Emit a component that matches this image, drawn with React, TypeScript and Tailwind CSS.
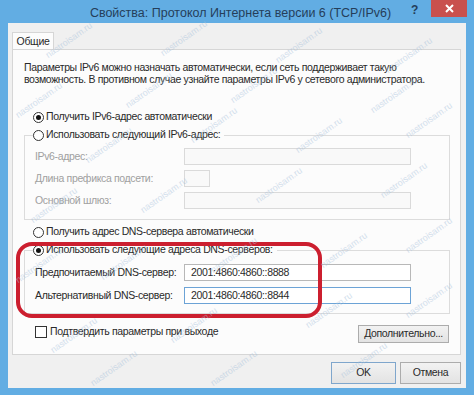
import React from 'react';

const font = { fontFamily: '"Liberation Sans", Arial, sans-serif' };

const marks: [number, number][] = [
  [70, 40], [185, 38], [300, 45], [410, 55],
  [40, 100], [150, 90], [255, 85], [395, 95],
  [110, 145], [215, 125], [320, 135], [430, 120],
  [55, 205], [165, 195], [280, 185], [405, 180],
  [40, 265], [125, 262], [235, 255], [345, 250], [430, 235],
  [75, 335], [195, 325], [330, 310], [430, 300],
  [115, 368], [235, 368], [365, 360],
];

function Radio({ checked }: { checked?: boolean }) {
  return (
    <span className="w-[11px] h-[11px] rounded-full border border-[#333] bg-white flex items-center justify-center shrink-0">
      {checked && <span className="w-[5px] h-[5px] rounded-full bg-[#111]" />}
    </span>
  );
}

function Field({
  label,
  value,
  disabled,
  small,
  focused,
}: {
  label: string;
  value?: string;
  disabled?: boolean;
  small?: boolean;
  focused?: boolean;
}) {
  return (
    <div className="flex items-center h-[17px]">
      <span className={`w-[149px] whitespace-nowrap ${disabled ? 'text-[#a0a0a0]' : 'text-[#2a2a2a]'}`}>{label}</span>
      <div
        className={`h-[17px] border flex items-center px-[6px] text-[#2a2a2a] ${
          small ? 'w-[26px]' : 'w-[227px]'
        } ${
          disabled
            ? 'border-[#dadada] bg-[#f9f9f9]'
            : focused
              ? 'border-[#6ca3d6] bg-white'
              : 'border-[#b8b8b8] bg-white'
        }`}
      >
        {value}
      </div>
    </div>
  );
}

export default function App() {
  return (
    <div
      className="w-[474px] h-[395px] bg-[#62ade3] relative overflow-hidden text-[10.5px] tracking-[-0.35px]"
      style={font}
    >
      {/* Title bar */}
      <div className="h-[23px] flex items-start">
        <div className="flex-1 pl-[70px] text-center text-[12.5px] tracking-normal leading-[26px] text-[#253e5a] whitespace-nowrap">
          Свойства: Протокол Интернета версии 6 (TCP/IPv6)
        </div>
        <div className="w-[20px] text-[12px] font-bold leading-[20px] text-[#253e5a]">?</div>
        <div className="w-[36px] h-[17px] mr-[7px] bg-[#c9504e] flex items-center justify-center">
          <svg width="9" height="9" viewBox="0 0 9 9">
            <path d="M1 1L8 8M8 1L1 8" stroke="white" strokeWidth="2" />
          </svg>
        </div>
      </div>

      {/* Client area */}
      <div className="mx-[8px] h-[365px] bg-[#f0f0f0] pl-[4px] pr-[5px] pt-[9px] flex flex-col">
        <div className="flex">
          <div className="h-[18px] w-[42px] border border-b-0 border-[#d6d6d6] bg-[#fcfcfc] text-[#2a2a2a] flex items-center justify-center whitespace-nowrap">
            Общие
          </div>
        </div>
        <div className="h-[306px] -mt-px border border-[#d6d6d6] bg-[#fcfcfc] flex flex-col">
          <p className="mt-[11px] ml-[11px] leading-[12px] text-[#2a2a2a] whitespace-nowrap">
            Параметры IPv6 можно назначать автоматически, если сеть поддерживает такую
            <br />
            возможность. В противном случае узнайте параметры IPv6 у сетевого администратора.
          </p>

          <div className="mt-[25px] ml-[20px] h-[14px] flex items-center gap-[2px] text-[#2a2a2a]">
            <Radio checked />
            <span>Получить IPv6-адрес автоматически</span>
          </div>

          <fieldset className="mt-[4px] ml-[11px] w-[426px] border border-[#dcdcdc] pl-[10px] pr-[38px] pt-[6px] pb-[10px] flex flex-col gap-[5px]">
            <legend className="ml-[-2px] pr-[4px] h-[14px] flex items-center gap-[2px] text-[#2a2a2a]">
              <Radio />
              <span>Использовать следующий IPv6-адрес:</span>
            </legend>
            <Field label="IPv6-адрес:" disabled />
            <Field label="Длина префикса подсети:" disabled small />
            <Field label="Основной шлюз:" disabled />
          </fieldset>

          <div className="mt-[5px] ml-[20px] h-[14px] flex items-center gap-[2px] text-[#2a2a2a]">
            <Radio />
            <span>Получить адрес DNS-сервера автоматически</span>
          </div>

          <fieldset className="mt-[4px] ml-[11px] w-[426px] border border-[#dcdcdc] pl-[10px] pr-[38px] pt-[7px] pb-[9px] flex flex-col gap-[6px]">
            <legend className="ml-[-2px] pr-[4px] h-[14px] flex items-center gap-[2px] text-[#2a2a2a]">
              <Radio checked />
              <span>Использовать следующие адреса DNS-серверов:</span>
            </legend>
            <Field label="Предпочитаемый DNS-сервер:" value="2001:4860:4860::8888" />
            <Field label="Альтернативный DNS-сервер:" value="2001:4860:4860::8844" focused />
          </fieldset>

          <div className="mt-[11px] ml-[22px] mr-[11px] h-[18px] flex items-start justify-between">
            <div className="h-[13px] flex items-center gap-[3px] text-[#2a2a2a]">
              <span className="w-[12px] h-[12px] border border-[#333] bg-white" />
              <span>Подтвердить параметры при выходе</span>
            </div>
            <button className="w-[91px] h-[18px] border border-[#acacac] bg-gradient-to-b from-[#f2f2f2] to-[#e3e3e3] text-[#2a2a2a] whitespace-nowrap">
              Дополнительно...
            </button>
          </div>
        </div>

        <div className="mt-[7px] flex justify-end gap-[4px]">
          <button className="w-[65px] h-[22px] border border-[#7fa6cc] bg-gradient-to-b from-[#f2f2f2] to-[#e3e3e3] text-[#2a2a2a]">
            OK
          </button>
          <button className="w-[61px] h-[22px] border border-[#acacac] bg-gradient-to-b from-[#f2f2f2] to-[#e3e3e3] text-[#2a2a2a]">
            Отмена
          </button>
        </div>
      </div>

      {/* Red highlight */}
      <div className="absolute left-[16px] top-[242px] w-[306px] h-[76px] border-4 border-[#cc1f2f] rounded-[16px] pointer-events-none" />

      {/* Watermarks */}
      {marks.map(([x, y], i) => (
        <span
          key={i}
          className="absolute text-[9px] tracking-normal text-[#a9c3dc] opacity-50 pointer-events-none whitespace-nowrap -rotate-[35deg]"
          style={{ left: x - 28, top: y - 6 }}
        >
          nastroisam.ru
        </span>
      ))}
    </div>
  );
}
